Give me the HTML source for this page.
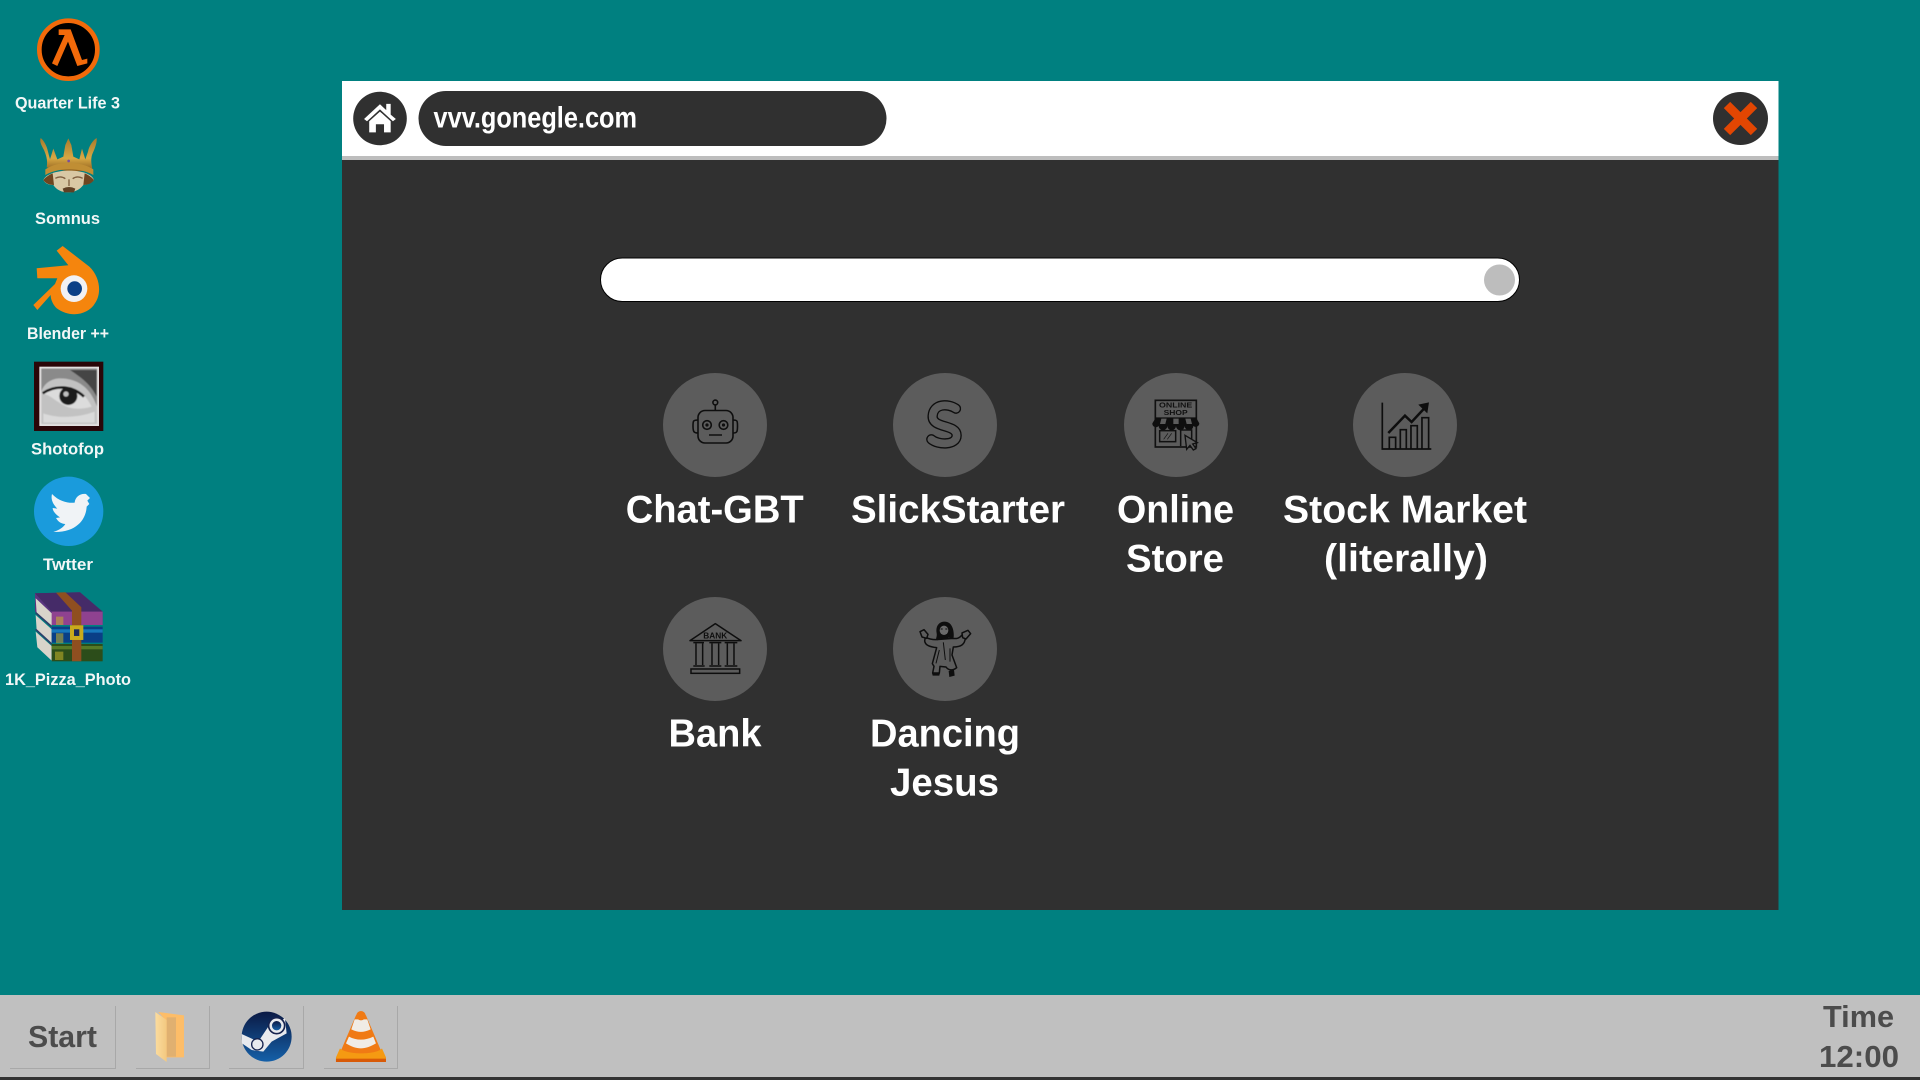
<!DOCTYPE html>
<html lang="en">
<head>
<meta charset="utf-8">
<title>Desktop</title>
<style>
html,body{margin:0;padding:0;width:1920px;height:1080px;overflow:hidden;background:#008080}
svg{display:block}
text{font-family:"Liberation Sans",sans-serif;font-weight:bold}
.l{font-size:39px;fill:#fff}
.s{font-size:17px;fill:#f2f7f7}
.t{font-size:31px;fill:#4c4c4c}
</style>
</head>
<body>
<svg width="1920" height="1080" viewBox="0 0 1920 1080" xmlns="http://www.w3.org/2000/svg">
<defs>
<linearGradient id="st" x1="0" y1="0" x2="0" y2="1"><stop offset="0" stop-color="#0b1a45"/><stop offset="1" stop-color="#1560a8"/></linearGradient>
<linearGradient id="fo" x1="0" y1="0" x2="1" y2="0"><stop offset="0" stop-color="#fbdc9e"/><stop offset="1" stop-color="#f3c880"/></linearGradient>
<linearGradient id="go" x1="0" y1="0" x2="0" y2="1"><stop offset="0" stop-color="#a87a2c"/><stop offset=".6" stop-color="#d8a844"/><stop offset="1" stop-color="#8a5c1c"/></linearGradient>
<filter id="bl" x="-5%" y="-5%" width="110%" height="110%"><feGaussianBlur stdDeviation="1.200"/></filter>
</defs>
<rect width="1920" height="1080" fill="#008080"/>

<!-- window -->
<rect x="342" y="81" width="1436.500" height="829" fill="#303030"/>
<rect x="342" y="81" width="1436.500" height="75" fill="#fff"/>
<rect x="342" y="156" width="1436.500" height="4" fill="#bdbdbd"/>
<circle cx="380" cy="118.500" r="26.800" fill="#303030"/>
<g transform="translate(330 65) scale(.37)">
<path d="M92 146 L135 106 L152 122 V105 H164 V134 L178 146 L170 152 L135 120 L100 152Z" fill="#fff"/>
<path d="M106 152 L135 126 L164 152 V182 H146 V160 H124 V182 H106Z" fill="#fff"/>
</g>
<rect x="418.500" y="91" width="468" height="55" rx="27.500" fill="#303030"/>
<text x="433.500" y="127.500" font-size="30" fill="#fff" textLength="203.500" lengthAdjust="spacingAndGlyphs">vvv.gonegle.com</text>
<ellipse cx="1740.500" cy="118.500" rx="27.500" ry="26.500" fill="#303030"/>
<path d="M1727 105 L1754 132 M1754 105 L1727 132" stroke="#e34602" stroke-width="9" fill="none"/>

<!-- search -->
<rect x="600.500" y="258" width="919" height="43.500" rx="21.700" fill="#fff" stroke="#000" stroke-width="1"/>
<circle cx="1499.500" cy="280" r="15.500" fill="#bdbdbd"/>

<!-- app circles -->
<g fill="#5c5c5c">
<circle cx="715" cy="425" r="52"/><circle cx="945" cy="425" r="52"/><circle cx="1176" cy="425" r="52"/><circle cx="1405" cy="425" r="52"/>
<circle cx="715" cy="649" r="52"/><circle cx="945" cy="649" r="52"/>
</g>

<!-- robot -->
<g fill="none" stroke="#0e0e0e" stroke-width="1.600">
<rect x="698" y="410.500" width="35" height="32.500" rx="7"/>
<circle cx="707" cy="425" r="4.300"/><circle cx="723.500" cy="425" r="4.300"/>
<circle cx="707" cy="425" r=".8"/><circle cx="723.500" cy="425" r=".8"/>
<path d="M709 435H722M715.300 410.500V405"/><circle cx="715.300" cy="402.500" r="2.400"/>
<path d="M698 420 C693 420 693 421 693 426 C693 432 694 433 698 433M733 420 C737.500 420 737.500 421 737.500 426 C737.500 432 737 433 733 433"/>
</g>
<!-- S -->
<g transform="translate(640 360) scale(.3333)" fill="none" stroke-linecap="round">
<path d="M948 146 C925 130 880 130 878 168 C876 206 950 192 950 226 C950 256 895 256 874 238" stroke="#0e0e0e" stroke-width="31"/>
<path d="M948 146 C925 130 880 130 878 168 C876 206 950 192 950 226 C950 256 895 256 874 238" stroke="#5c5c5c" stroke-width="23"/>
</g>
<!-- shop -->
<g transform="translate(1110 360) scale(.3333)">
<rect x="136" y="121" width="123" height="140" fill="none" stroke="#111" stroke-width="5"/>
<text x="197" y="143" font-size="21" text-anchor="middle" fill="#111" textLength="100" lengthAdjust="spacingAndGlyphs">ONLINE</text>
<text x="197" y="165" font-size="21" text-anchor="middle" fill="#111" textLength="72" lengthAdjust="spacingAndGlyphs">SHOP</text>
<path d="M138 172H258L268 190 A11 11 0 0 1 250 198 A13 13 0 0 1 224 198 A13 13 0 0 1 198 198 A13 13 0 0 1 172 198 A13 13 0 0 1 146 198 A11 11 0 0 1 127 190Z" fill="#0e0e0e"/>
<path d="M154 176H170L166 192H150ZM190 176H206V192H190ZM226 176H242L246 192H230Z" fill="#5c5c5c"/>
<rect x="149" y="212" width="48" height="33" fill="none" stroke="#111" stroke-width="4.500"/>
<path d="M161 238L174 220M172 238L185 220" stroke="#111" stroke-width="2"/>
<path d="M212 210H245V240M212 210V258" fill="none" stroke="#111" stroke-width="4.500"/>
<path d="M225 226 L262 248 L248 252 L258 266 L250 270 L240 256 L230 268Z" fill="#5c5c5c" stroke="#111" stroke-width="4"/>
</g>
<!-- chart -->
<g transform="translate(1110 360) scale(.3333)" fill="none" stroke="#0e0e0e">
<path d="M817 128V267H964" stroke-width="5"/>
<path d="M838 266V232H857V266M871 266V209H889V266M903 266V197H922V266M936 266V173H956V266" stroke-width="5"/>
<path d="M835 219 L885 167 L905 186 L945 143" stroke-width="7.500"/>
<path d="M925 134 L957 127 L952 160Z" fill="#0e0e0e" stroke="none"/>
</g>
<!-- bank -->
<g transform="translate(640 590) scale(.3333)" fill="none" stroke="#0e0e0e" stroke-width="4.500">
<path d="M150 152 L226 101 L303 152Z" stroke-linejoin="round"/>
<text x="226" y="146" font-size="24" text-anchor="middle" fill="#0e0e0e" stroke="none" textLength="72" lengthAdjust="spacingAndGlyphs">BANK</text>
<path d="M160 158H192M208 158H244M254 158H292"/>
<path d="M168 160V225M188 160V225M216 160V225M236 160V225M262 160V225M282 160V225"/>
<path d="M160 228H194M208 228H244M254 228H292"/>
<rect x="153" y="237" width="146" height="13"/>
</g>
<!-- jesus -->
<g transform="translate(900 605) scale(.3333)" stroke="#0e0e0e" stroke-linejoin="round">
<path d="M76 96 C86 102 95 104 108 104 L158 100 C170 102 178 100 186 90 L196 100 C194 118 184 126 160 126 L156 150 L170 188 C158 198 145 196 138 186 L120 184 L118 204 L98 204 L102 184 L97 176 L110 128 C92 126 76 122 74 108Z" fill="#5c5c5c" stroke-width="4.500"/>
<path d="M60 80 L72 74 L84 88 L80 100 L66 96Z M186 84 L204 76 L212 86 L198 102 L188 98Z" fill="#5c5c5c" stroke-width="4.500"/>
<path d="M134 50 C116 50 106 65 110 85 C112 98 104 102 112 106 L122 100 C130 106 140 104 146 98 L160 102 C164 86 160 50 134 50Z" fill="#0e0e0e" stroke="none"/>
<ellipse cx="132" cy="76" rx="13" ry="14" fill="#6a6a6a" stroke="none"/>
<path d="M122 72H128M136 72H142" stroke-width="3" fill="none"/>
<path d="M120 87 Q132 94 144 87 L142 100 Q131 104 122 100Z" fill="#0e0e0e" stroke="none"/>
<path d="M130 112 L136 165 M118 135 L108 175 M150 130 L150 170" fill="none" stroke-width="3"/>
<path d="M96 204 L120 202 L118 212 L98 212Z M146 198 L162 194 L164 212 L148 216Z" fill="#0e0e0e" stroke="none"/>
</g>

<!-- labels -->
<text class="l" x="625.700" y="522.500" textLength="178" lengthAdjust="spacingAndGlyphs">Chat-GBT</text>
<text class="l" x="851" y="522.500" textLength="214" lengthAdjust="spacingAndGlyphs">SlickStarter</text>
<text class="l" x="1117" y="522.500" textLength="117" lengthAdjust="spacingAndGlyphs">Online</text>
<text class="l" x="1126" y="571.500" textLength="98" lengthAdjust="spacingAndGlyphs">Store</text>
<text class="l" x="1283" y="522.500" textLength="244" lengthAdjust="spacingAndGlyphs">Stock Market</text>
<text class="l" x="1324" y="571.500" textLength="164" lengthAdjust="spacingAndGlyphs">(literally)</text>
<text class="l" x="668.500" y="746.500" textLength="93" lengthAdjust="spacingAndGlyphs">Bank</text>
<text class="l" x="870" y="746.500" textLength="150" lengthAdjust="spacingAndGlyphs">Dancing</text>
<text class="l" x="890" y="795.500" textLength="109" lengthAdjust="spacingAndGlyphs">Jesus</text>

<!-- desktop icons: halflife, blender -->
<g transform="scale(.3333)">
<circle cx="205" cy="149" r="87" fill="#000" stroke="#f26a0a" stroke-width="14"/>
<path d="M176 88 H212 L246 180 L262 176 L262 190 L232 198 L204 125 L172 198 L156 190 L194 105 L176 105Z" fill="#f26a0a"/>

<path d="M170 752 L188 738 L268 800 C300 830 306 880 285 910 C265 945 210 955 170 925 C160 915 152 900 152 885 L112 930 L100 915 L165 852 L172 835 H112 L110 805 L205 796Z" fill="#f5850d"/>
<circle cx="222" cy="866" r="40" fill="#f1f1f4"/>
<circle cx="224" cy="866" r="22" fill="#0b3f86"/>
</g>
<!-- crown -->
<g transform="translate(30 130) scale(.3333)">
<path d="M50 112 C54 90 48 75 42 60 C34 45 28 35 32 24 C40 30 50 45 54 65 L60 88 L70 56 L82 88 L100 80 L106 45 L115 25 L124 45 L130 80 L148 88 L156 56 L166 88 L174 65 C178 45 190 30 200 24 C202 40 192 60 186 75 C182 90 184 100 188 122 L120 125Z" fill="url(#go)"/>
<path d="M46 118 C85 92 150 92 190 118 L190 135 C150 112 85 112 46 135Z" fill="#c08e34"/>
<circle cx="116" cy="93" r="4" fill="#7a4ea0"/>
<path d="M40 150 C50 130 85 122 118 122 C150 122 185 130 192 150 C185 160 170 165 160 165 C150 178 135 187 115 187 C95 187 80 180 70 165 C55 165 45 160 40 150Z" fill="#d9c8a4"/>
<path d="M40 150 C48 140 58 134 68 130 L72 165 C58 165 46 160 40 150Z M192 150 C184 140 174 134 164 130 L160 165 C174 165 186 160 192 150Z" fill="#6e4620"/>
<path d="M76 145 Q92 136 106 146 M128 146 Q142 136 158 145 M117 148 V168" fill="none" stroke="#7f6040" stroke-width="4"/>
<path d="M98 176 Q117 166 136 176 L132 187 H102Z" fill="#5f4024"/>
</g>

<!-- shotofop, twitter, winrar -->
<g transform="translate(0 350) scale(.3333)">
<rect x="102" y="35" width="208" height="208" fill="#2a0608"/>
<rect x="118" y="50" width="179" height="178" fill="#e4e2e2"/>
<g filter="url(#bl)">
<rect x="124" y="56" width="167" height="166" fill="#c2c2c2"/>
<path d="M124 56 H291 V170 C270 110 230 85 180 85 C150 85 130 105 124 125Z" fill="#8a8a8a"/>
<path d="M210 60 H290 V140 C270 100 240 80 210 60Z" fill="#454545"/>
<path d="M128 130 C160 100 200 100 232 120 C255 135 265 150 275 170 C250 178 215 180 190 165 C170 155 150 135 128 130Z" fill="#dcdcdc"/>
<path d="M128 130 C165 105 215 105 252 140" fill="none" stroke="#151515" stroke-width="8"/>
<circle cx="205" cy="138" r="27" fill="#1a1a1a"/>
<circle cx="198" cy="132" r="8" fill="#bfbfbf"/>
<path d="M130 190 C170 205 230 205 284 185 L284 218 H130Z" fill="#dadada"/>
</g>

<circle cx="206" cy="484" r="104" fill="#1a9bdc"/>
<path d="M156 432 C178 455 205 460 224 458 C226 440 240 430 258 432 L270 444 L262 452 L268 462 L260 470 C258 510 228 548 160 546 C178 540 190 532 196 522 C175 520 170 506 168 504 L180 502 C165 492 158 482 158 474 L172 476 C158 462 152 448 156 432Z" fill="#f0f3f6"/>

<path d="M105 730 L240 727 L308 785 V825 H155 L105 785Z" fill="#5a3580"/>
<path d="M105 730 L240 727 L308 785 H155Z" fill="#452b68"/>
<rect x="155" y="785" width="153" height="40" fill="#8f4290"/>
<path d="M107 745 L155 790 V832 L110 792Z M107 795 L155 838 V880 L110 842Z M107 845 L155 888 V932 L112 892Z" fill="#d8d4ca"/>
<path d="M107 788 L155 830 M107 838 L155 882" stroke="#2c3f6a" stroke-width="5"/>
<rect x="155" y="830" width="153" height="48" fill="#0a3f86"/>
<rect x="155" y="838" width="153" height="10" fill="#1878bc"/>
<rect x="155" y="882" width="153" height="52" fill="#2c4d1a"/>
<rect x="155" y="888" width="153" height="10" fill="#567a28"/>
<path d="M168 728 L196 727 L244 772 V934 H216 V782Z" fill="#8f4f20"/>
<rect x="210" y="826" width="40" height="44" fill="#c9aa1c"/>
<rect x="222" y="838" width="16" height="20" fill="#1b2a5a"/>
<path d="M168 800 H190 V825 H168Z M168 850 H190 V880 H168Z M165 905 H190 V930 H165Z" fill="#c8b42a" opacity=".55"/>
</g>
<text class="s" x="15" y="108.500" textLength="105" lengthAdjust="spacingAndGlyphs">Quarter Life 3</text>
<text class="s" x="35" y="224" textLength="65" lengthAdjust="spacingAndGlyphs">Somnus</text>
<text class="s" x="27" y="339" textLength="82" lengthAdjust="spacingAndGlyphs">Blender ++</text>
<text class="s" x="31" y="454.500" textLength="73" lengthAdjust="spacingAndGlyphs">Shotofop</text>
<text class="s" x="43" y="570" textLength="50" lengthAdjust="spacingAndGlyphs">Twtter</text>
<text class="s" x="5" y="685" textLength="126" lengthAdjust="spacingAndGlyphs">1K_Pizza_Photo</text>

<!-- taskbar -->
<rect x="0" y="995" width="1920" height="82" fill="#c0c0c0"/>
<rect x="0" y="1077" width="1920" height="3" fill="#333"/>
<g fill="none" stroke="#a8a8a8" stroke-width="1">
<path d="M10 1068.500H115.500V1006"/><path d="M136 1068.500H209.500V1006"/><path d="M229 1068.500H303.500V1006"/><path d="M324 1068.500H397.500V1006"/>
</g>
<text class="t" x="28" y="1047" textLength="69" lengthAdjust="spacingAndGlyphs">Start</text>
<text class="t" x="1823" y="1027" textLength="71" lengthAdjust="spacingAndGlyphs">Time</text>
<text class="t" x="1819" y="1067" textLength="80" lengthAdjust="spacingAndGlyphs">12:00</text>
<g transform="translate(0 980) scale(.3333)">
<path d="M475 96 L552 106 V232 H496 L496 120Z" fill="#fdbd68"/>
<rect x="500" y="112" width="28" height="118" fill="#e0b070"/>
<path d="M466 96 L500 120 V246 L468 222Z" fill="url(#fo)"/>

<circle cx="800" cy="170" r="75" fill="url(#st)"/>
<path d="M725 162 L775 185 L805 140 L855 115 L860 160 L815 185 L790 215 L755 210 L726 190Z" fill="#e8eaee"/>
<circle cx="830" cy="137" r="24" fill="#e8eaee" stroke="#16234f" stroke-width="5"/>
<circle cx="830" cy="137" r="14" fill="url(#st)"/>
<circle cx="772" cy="193" r="17" fill="#e8eaee" stroke="#16234f" stroke-width="4"/>
<path d="M1083 95 L1098 106 L1150 228 H1016 L1068 106Z" fill="#f07a14"/>
<path d="M1064 118 H1102 L1112 148 C1090 158 1075 158 1054 148Z" fill="#f0ece6"/>
<path d="M1047 170 C1070 182 1095 182 1120 170 L1128 190 C1095 210 1070 210 1038 190Z" fill="#f0ece6"/>
<circle cx="1083" cy="107" r="14" fill="#f07a14"/>
<path d="M1020 205 L1008 232 V246 H1158 V232 L1146 205 C1130 225 1040 225 1020 205Z" fill="#f59a12"/>
<rect x="1008" y="236" width="150" height="10" fill="#d85a08"/>
</g>
</svg>
</body>
</html>
